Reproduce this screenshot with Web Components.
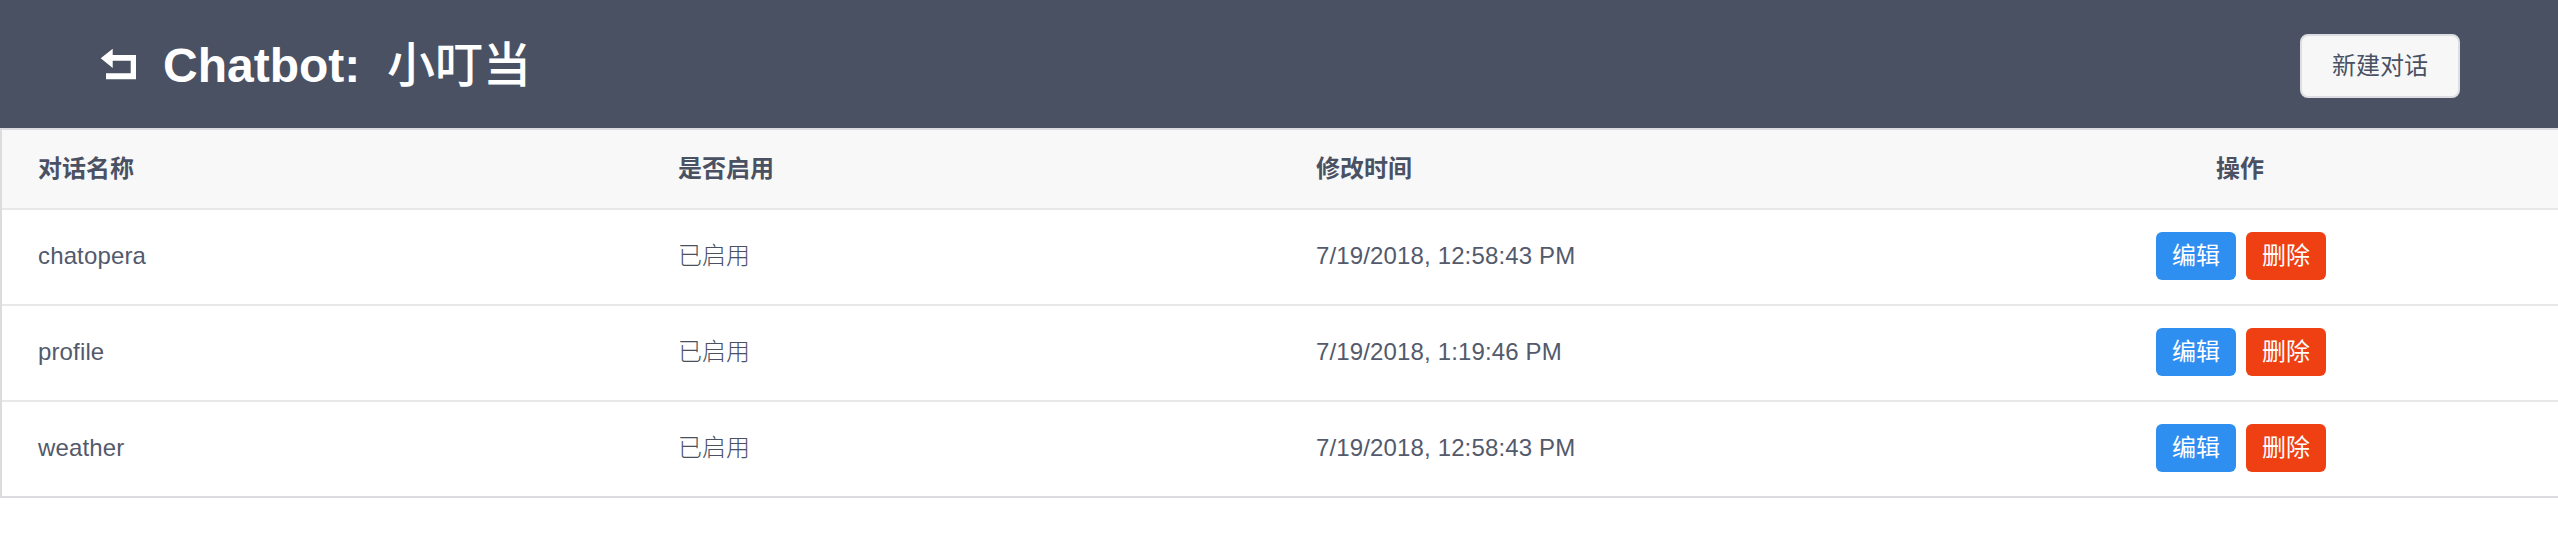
<!DOCTYPE html>
<html lang="zh-CN"><head><meta charset="utf-8"><title>Chatbot</title>
<style>
html,body{margin:0;padding:0;background:#fff}
body{font:24px/36px "Liberation Sans","Noto Sans CJK SC",sans-serif;color:#4a5163}
.l{letter-spacing:.14px;color:#535a6b}
.c{font-weight:300}
</style></head><body>
<app-header>
  <span slot="title">Chatbot:&nbsp;&nbsp;<span style="font-weight:500">小叮当</span></span>
  <app-button slot="action" kind="light">新建对话</app-button>
</app-header>
<dialog-table>
  <table-row head>
    <span>对话名称</span><span>是否启用</span><span>修改时间</span><span>操作</span>
  </table-row>
  <table-row>
    <span class="l">chatopera</span><span class="c">已启用</span><span class="l">7/19/2018, 12:58:43 PM</span>
    <row-actions><app-button kind="info">编辑</app-button><app-button kind="danger">删除</app-button></row-actions>
  </table-row>
  <table-row>
    <span class="l">profile</span><span class="c">已启用</span><span class="l">7/19/2018, 1:19:46 PM</span>
    <row-actions><app-button kind="info">编辑</app-button><app-button kind="danger">删除</app-button></row-actions>
  </table-row>
  <table-row last>
    <span class="l">weather</span><span class="c">已启用</span><span class="l">7/19/2018, 12:58:43 PM</span>
    <row-actions><app-button kind="info">编辑</app-button><app-button kind="danger">删除</app-button></row-actions>
  </table-row>
</dialog-table>
<script>
function def(name, css, html){
  customElements.define(name, class extends HTMLElement{
    constructor(){super();this.attachShadow({mode:'open'}).innerHTML='<style>'+css+'</style>'+html;}
  });
}
def('app-header',`
  :host{display:flex;align-items:center;justify-content:space-between;box-sizing:border-box;height:128px;padding:4px 98px 0 100px;background:#4a5163;color:#fff}
  .t{display:flex;align-items:center;gap:27px;font-size:48px;line-height:60px;font-weight:700}
  svg{display:block;width:36px;height:32px;margin-top:-4px}
`,`<div class="t"><svg viewBox="0 0 36 32" aria-hidden="true"><path fill="#fff" d="M.7 10.300 12.700 .7 12.700 7 36 7 36 31.300 6 31.300 6 25.300 30.700 25.300 30.700 12.700 12.700 12.700 12.700 20Z"/></svg><slot name="title"></slot></div><slot name="action"></slot>`);
def('app-button',`
  :host{display:inline-flex;align-items:center;justify-content:center;box-sizing:border-box;font-size:24px;border-radius:6px}
  :host([kind=light]){width:160px;height:64px;background:#f7f7f8;border:2px solid #dcdee3;color:#4a5163;border-radius:8px}
  :host([kind=info]){width:80px;height:48px;background:#2f8ff0;color:#fff}
  :host([kind=danger]){width:80px;height:48px;background:#ef4013;color:#fff}
`,`<slot></slot>`);
def('dialog-table',`
  :host{display:block;border:2px solid #dcdce0;border-right:0;box-sizing:border-box;height:370px}
`,`<slot></slot>`);
def('table-row',`
  :host{display:grid;grid-template-columns:640px 638px 642px 1fr;align-items:center;box-sizing:border-box;height:96px;padding:0 0 2px;border-bottom:2px solid #e8e8e8}
  :host([head]){height:80px;padding:0;background:#f8f8f8;font-weight:700}
  :host([last]){height:94px;border-bottom:0}
  ::slotted(*){padding-left:36px;min-width:0}
  ::slotted(:last-child){padding-left:0;text-align:center;justify-self:center}
`,`<slot></slot>`);
def('row-actions',`
  :host{display:block}
  div{display:flex;gap:10px;padding-left:2px}
`,`<div><slot></slot></div>`);
</script>
</body></html>
